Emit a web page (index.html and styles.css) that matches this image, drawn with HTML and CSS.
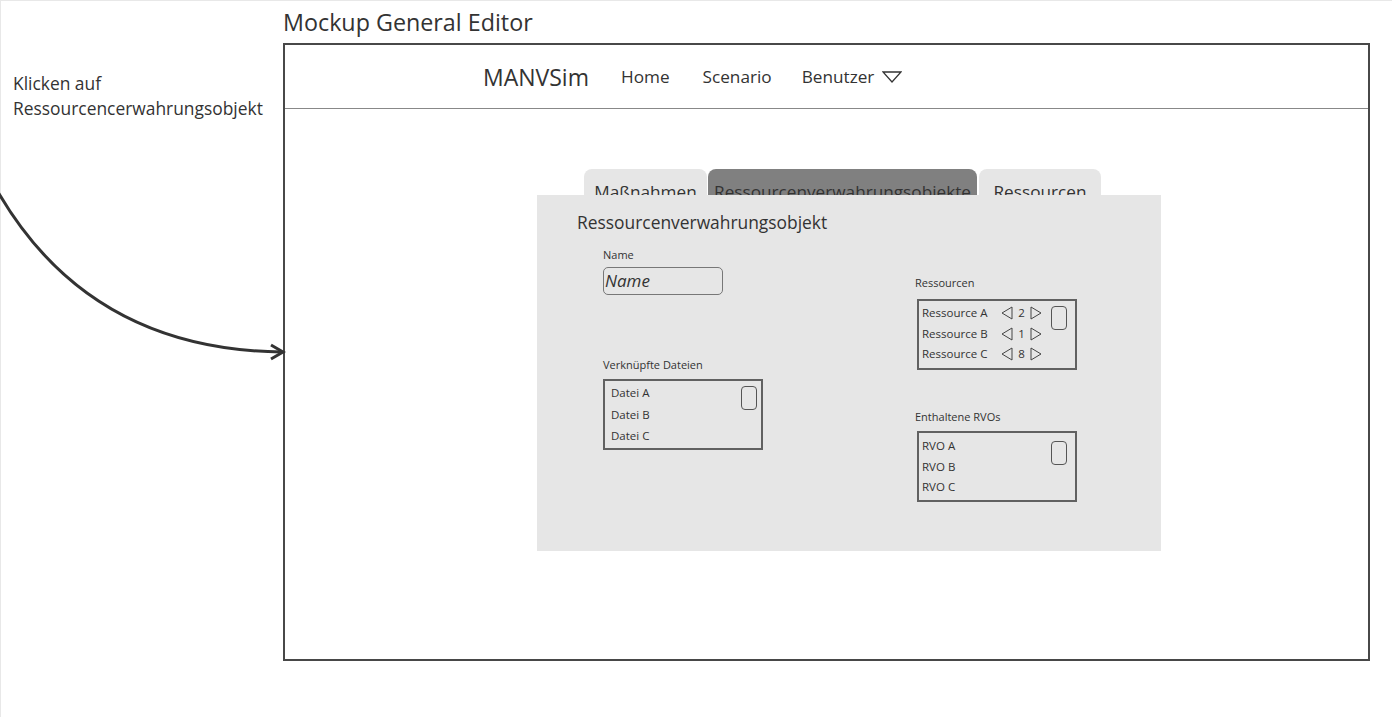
FILE: index.html
```html
<!DOCTYPE html>
<html lang="de">
<head>
<meta charset="utf-8">
<title>Mockup General Editor</title>
<link rel="stylesheet" href="styles.css">
</head>
<body>
<div class="canvas">
  <svg class="connector" viewBox="0 0 300 380" width="300" height="380" aria-hidden="true">
    <path d="M -2 192 Q 90 350 282 352" fill="none" stroke="#333" stroke-width="3"/>
    <path d="M 271 345 L 283 352 L 271 359" fill="none" stroke="#333" stroke-width="3" stroke-linejoin="miter"/>
  </svg>
  <aside class="note">Klicken auf<br>Ressourcencerwahrungsobjekt</aside>
  <section class="mockup">
    <h1 class="mockup-title">Mockup General Editor</h1>
    <div class="frame">
      <header class="topbar">
        <span class="brand">MANVSim</span>
        <nav class="nav">
          <span class="nav-link">Home</span>
          <span class="nav-link">Scenario</span>
          <span class="nav-link nav-drop">Benutzer
            <svg class="drop-icon" viewBox="0 0 20 12" width="20" height="12" aria-hidden="true"><polygon points="1,1 19,1 10,11" fill="none" stroke="#333" stroke-width="1.3" stroke-linejoin="miter"/></svg>
          </span>
        </nav>
      </header>
      <main class="stage">
        <div class="editor">
          <div class="tabs">
            <div class="tab tab-first">Maßnahmen</div>
            <div class="tab tab-active">Ressourcenverwahrungsobjekte</div>
            <div class="tab tab-last">Ressourcen</div>
          </div>
          <div class="panel">
            <h2 class="panel-title">Ressourcenverwahrungsobjekt</h2>
            <div class="fields">
              <div class="col col-left">
                <p class="label label-name">Name</p>
                <div class="input">Name</div>
                <p class="label label-files">Verknüpfte Dateien</p>
                <div class="listbox listbox-files">
                  <ul class="items">
                    <li>Datei A</li>
                    <li>Datei B</li>
                    <li>Datei C</li>
                  </ul>
                  <span class="thumb"></span>
                </div>
              </div>
              <div class="col col-right">
                <p class="label label-res">Ressourcen</p>
                <div class="listbox listbox-res">
                  <ul class="items">
                    <li class="res-row"><span class="res-name">Ressource A</span><svg class="tri" viewBox="0 0 12 14" width="12" height="14"><polygon points="11,1 11,13 1,7" fill="none" stroke="#444" stroke-width="1"/></svg><span class="num">2</span><svg class="tri" viewBox="0 0 12 14" width="12" height="14"><polygon points="1,1 1,13 11,7" fill="none" stroke="#444" stroke-width="1"/></svg></li>
                    <li class="res-row"><span class="res-name">Ressource B</span><svg class="tri" viewBox="0 0 12 14" width="12" height="14"><polygon points="11,1 11,13 1,7" fill="none" stroke="#444" stroke-width="1"/></svg><span class="num">1</span><svg class="tri" viewBox="0 0 12 14" width="12" height="14"><polygon points="1,1 1,13 11,7" fill="none" stroke="#444" stroke-width="1"/></svg></li>
                    <li class="res-row"><span class="res-name">Ressource C</span><svg class="tri" viewBox="0 0 12 14" width="12" height="14"><polygon points="11,1 11,13 1,7" fill="none" stroke="#444" stroke-width="1"/></svg><span class="num">8</span><svg class="tri" viewBox="0 0 12 14" width="12" height="14"><polygon points="1,1 1,13 11,7" fill="none" stroke="#444" stroke-width="1"/></svg></li>
                  </ul>
                  <span class="thumb"></span>
                </div>
                <p class="label label-rvo">Enthaltene RVOs</p>
                <div class="listbox listbox-rvo">
                  <ul class="items">
                    <li>RVO A</li>
                    <li>RVO B</li>
                    <li>RVO C</li>
                  </ul>
                  <span class="thumb"></span>
                </div>
              </div>
            </div>
          </div>
        </div>
      </main>
    </div>
  </section>
</div>
</body>
</html>
```
FILE: styles.css
```css
* { box-sizing: border-box; }

body {
  margin: 0;
  background: #fff;
  font-family: "Open Sans", "Noto Sans", sans-serif;
  color: #333;
}

.canvas {
  position: relative;
  display: flex;
  width: 1392px;
  height: 717px;
  overflow: hidden;
  box-shadow: inset 1px 1px 0 #e8e8e8;
}

.connector {
  position: absolute;
  left: 0;
  top: 0;
  pointer-events: none;
}

.note {
  flex: none;
  width: 283px;
  padding: 71px 0 0 13px;
  font-size: 17.4px;
  line-height: 25px;
}

.mockup {
  flex: none;
  width: 1087px;
}

.mockup-title {
  margin: 0;
  height: 43px;
  padding-top: 7px;
  font-size: 23.3px;
  line-height: 30px;
  font-weight: 400;
}

.frame {
  height: 618px;
  border: 2px solid #484848;
  display: flex;
  flex-direction: column;
}

.topbar {
  flex: none;
  height: 64px;
  border-bottom: 1px solid #888;
  display: flex;
  align-items: center;
  padding-left: 198px;
}

.brand {
  font-size: 23px;
  line-height: 30px;
  margin-right: 32px;
}

.nav {
  display: flex;
  align-items: center;
}

.nav-link {
  font-size: 17.2px;
  line-height: 23px;
}

.nav-link + .nav-link { margin-left: 33px; }
.nav-drop { margin-left: 30px !important; }

.nav-drop {
  display: flex;
  align-items: center;
  gap: 8px;
}

.drop-icon { display: block; }

.stage {
  flex: 1;
  padding: 60px 0 0 252px;
}

.editor {
  width: 624px;
}

.tabs {
  display: flex;
  height: 26px;
  margin-left: 47px;
}

.tab {
  height: 26px;
  overflow: hidden;
  white-space: nowrap;
  text-align: center;
  background: #e6e6e6;
  border-radius: 8px 8px 0 0;
  font-size: 17.2px;
  line-height: 23px;
  padding-top: 11px;
  color: #333;
}

.tab-first { width: 123px; margin-right: 1px; }
.tab-active { width: 269px; margin-right: 2px; background: #808080; display: flex; justify-content: center; }
.tab-last { width: 122px; }

.panel {
  height: 356px;
  background: #e6e6e6;
  padding: 16px 0 0 40px;
}

.panel-title {
  margin: 0;
  font-size: 17.4px;
  line-height: 23px;
  font-weight: 400;
}

.fields {
  display: grid;
  grid-template-columns: 312px 164px;
  margin-left: 26px;
}

.col {
  display: flex;
  flex-direction: column;
  align-items: flex-start;
}

.label {
  margin: 0;
  font-size: 11px;
  line-height: 15px;
  color: #333;
}

.label-name { margin-top: 13px; margin-bottom: 5px; }
.label-files { margin-top: 62px; margin-bottom: 7px; }
.label-res { margin-top: 41px; margin-bottom: 9px; }
.label-rvo { margin-top: 39px; margin-bottom: 7px; }

.input {
  width: 120px;
  height: 28px;
  border: 1px solid #777;
  border-radius: 5px;
  padding-left: 1px;
  font-size: 17px;
  line-height: 26px;
  font-style: italic;
  color: #333;
}

.listbox {
  display: flex;
  justify-content: space-between;
  align-items: flex-start;
  width: 160px;
  height: 71px;
  border: 2px solid #616161;
}

.listbox-res, .listbox-rvo { margin-left: 2px; }

.items {
  list-style: none;
  margin: 0;
  padding: 0;
  font-size: 11.5px;
  color: #333;
}

.listbox-files .items { padding: 1px 0 0 6px; line-height: 21.5px; }
.listbox-res .items { padding: 2px 0 0 3px; line-height: 20.5px; }
.listbox-rvo .items { padding: 3px 0 0 3px; line-height: 20.5px; }

.thumb {
  width: 16px;
  height: 24px;
  border: 1.5px solid #555;
  border-radius: 4px;
}

.listbox-files .thumb { margin: 5px 4px 0 0; }
.listbox-res .thumb { margin: 5px 8px 0 0; }
.listbox-rvo .thumb { margin: 8px 8px 0 0; }

.res-row {
  display: flex;
  align-items: center;
  height: 20.5px;
}

.res-name { width: 79px; }

.tri { display: block; flex: none; }

.num {
  width: 17px;
  text-align: center;
}
```
